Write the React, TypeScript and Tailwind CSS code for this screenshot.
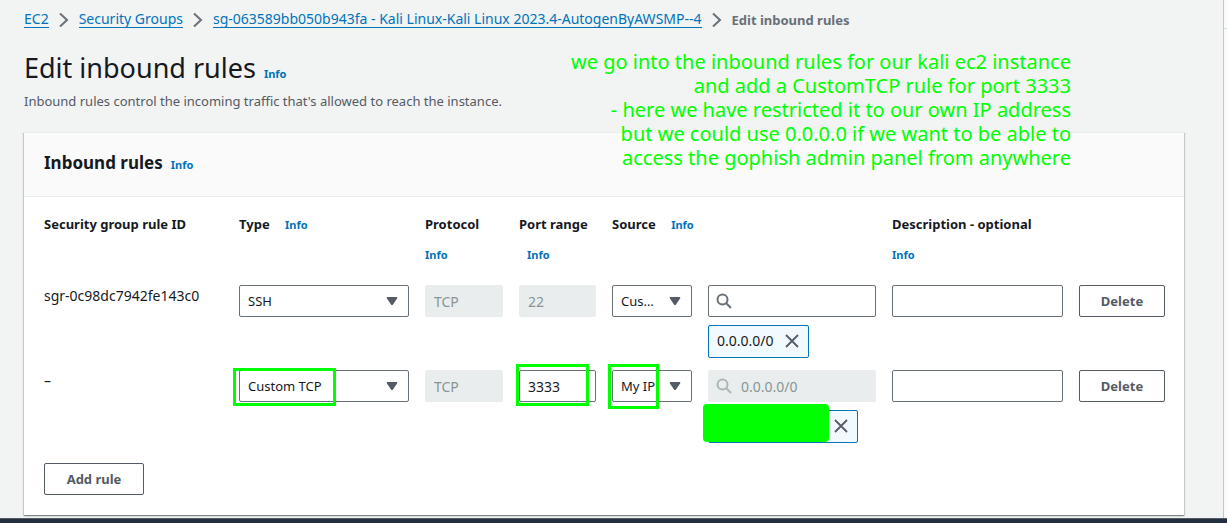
import React from "react";

const fieldBase =
  "block h-8 w-full rounded-xs border px-2 leading-5 outline-none";
const fieldEnabled = "border-[#687078] bg-white text-[#16191f]";
const fieldDisabled =
  "border-[#eaeded] bg-[#eaeded] text-[#879596] placeholder:text-[#879596]";

function Info({ className = "" }: { className?: string }) {
  return (
    <a href="#info" className={`text-[11px] leading-5 font-bold text-[#0073bb] ${className}`}>
      Info
    </a>
  );
}

function Chevron() {
  return (
    <svg viewBox="0 0 10 16" className="h-4 w-2.5 shrink-0" fill="none" stroke="#687078" strokeWidth="2">
      <path d="M1 1.5 8 8 1 14.5" />
    </svg>
  );
}

function SearchIcon({ dim }: { dim?: boolean }) {
  return (
    <svg
      viewBox="0 0 16 16"
      className="pointer-events-none absolute top-2 left-2 size-4"
      fill="none"
      stroke={dim ? "#aab7b8" : "#687078"}
      strokeWidth="2"
    >
      <circle cx="6.5" cy="6.5" r="5" />
      <path d="m10 10 5 5" />
    </svg>
  );
}

function Select({ label, options }: { label: string; options: string[] }) {
  return (
    <div className="relative">
      <select
        aria-label={label}
        className={`${fieldBase} ${fieldEnabled} appearance-none truncate pr-[34px] text-[13px]`}
      >
        {options.map((o) => (
          <option key={o}>{o}</option>
        ))}
      </select>
      <svg viewBox="0 0 12 8" className="pointer-events-none absolute top-3 right-[11px] h-2 w-3" fill="#545b64">
        <path d="M1.5 0h9a.8.8 0 0 1 .7 1.3L7 7.5a1.2 1.2 0 0 1-2 0L.8 1.3A.8.8 0 0 1 1.5 0Z" />
      </svg>
    </div>
  );
}

function Token({ text, wide }: { text: string; wide?: boolean }) {
  return (
    <div
      className={`mt-2 flex h-[33px] items-center justify-between rounded-xs border border-[#0073bb] bg-[#f1faff] px-2 pb-0.5 text-sm text-[#16191f] ${
        wide ? "w-[150px]" : "w-[101px]"
      }`}
    >
      <span>{text}</span>
      <button type="button" aria-label="Remove" className="flex size-4 items-center justify-center">
        <svg viewBox="0 0 16 16" className="size-4" fill="none" stroke="#545b64" strokeWidth="1.8">
          <path d="M2 2l12 12M14 2 2 14" />
        </svg>
      </button>
    </div>
  );
}

function Button({ children, className = "" }: { children: React.ReactNode; className?: string }) {
  return (
    <button
      type="button"
      className={`h-8 rounded-xs border border-[#545b64] bg-white text-[13px] leading-5 font-bold text-[#545b64] ${className}`}
    >
      {children}
    </button>
  );
}

function Mark({ className }: { className: string }) {
  return <div className={`pointer-events-none absolute border-3 border-[#00ff00] ${className}`} />;
}

const link = "border-b border-[#0073bb] text-sm leading-4 text-[#0073bb]";

const notes = [
  "we go into the inbound rules for our kali ec2 instance",
  "and add a CustomTCP rule for port 3333",
  "- here we have restricted it to our own IP address",
  "but we could use 0.0.0.0 if we want to be able to",
  "access the gophish admin panel from anywhere",
];

export default function App() {
  return (
    <div className="flex min-h-screen flex-col bg-[#f2f3f3] font-['Noto_Sans',sans-serif] text-[13px] leading-5 text-[#16191f]">
      <div className="flex flex-1">
        <main className="relative min-w-0 flex-1 pr-[39px] pb-[3px] pl-6">
          <nav aria-label="Breadcrumb" className="flex h-7 items-end gap-2.5 whitespace-nowrap">
            <a href="#ec2" className={link}>EC2</a>
            <Chevron />
            <a href="#groups" className={link}>Security Groups</a>
            <Chevron />
            <a href="#group" className={link}>
              sg-063589bb050b943fa - Kali Linux-Kali Linux 2023.4-AutogenByAWSMP--4
            </a>
            <Chevron />
            <span className="leading-4 font-bold text-[#687078]">Edit inbound rules</span>
          </nav>

          <h1 className="mt-[22px] flex items-baseline gap-2 text-[27px] leading-9">
            Edit inbound rules <Info />
          </h1>
          <p className="mt-[5px] text-[#545b64]">
            Inbound rules control the incoming traffic that's allowed to reach the instance.
          </p>

          <section className="mt-[21px] border-t border-[#eaeded] bg-white shadow-[0_1px_1px_0_rgba(0,28,36,0.3),1px_1px_1px_0_rgba(0,28,36,0.15),-1px_1px_1px_0_rgba(0,28,36,0.15)]">
            <h2 className="flex h-16 items-baseline gap-2 border-b border-[#eaeded] bg-[#fafafa] px-5 pt-[18px] text-[17px] leading-6 font-bold">
              Inbound rules <Info />
            </h2>
            <div className="pt-[17px] pr-[19px] pb-5 pl-5">
              <table className="w-full table-fixed text-left">
                <colgroup>
                  <col className="w-[195px]" />
                  <col className="w-[186px]" />
                  <col className="w-[94px]" />
                  <col className="w-[93px]" />
                  <col className="w-[96px]" />
                  <col className="w-[184px]" />
                  <col className="w-[187px]" />
                  <col className="w-[86px]" />
                </colgroup>
                <thead>
                  <tr className="h-[71px] align-top whitespace-nowrap">
                    <th>Security group rule ID</th>
                    <th>
                      Type <Info className="ml-3" />
                    </th>
                    <th>
                      Protocol
                      <Info className="mt-[11px] block" />
                    </th>
                    <th>
                      Port range
                      <Info className="mt-[11px] ml-2 block" />
                    </th>
                    <th colSpan={2}>
                      Source <Info className="ml-3" />
                    </th>
                    <th>
                      Description - optional
                      <Info className="mt-[11px] block" />
                    </th>
                    <td />
                  </tr>
                </thead>
                <tbody>
                  <tr className="h-[85px] align-top">
                    <td className="pt-px text-sm leading-5">sgr-0c98dc7942fe143c0</td>
                    <td className="pr-4"><Select label="Type" options={["SSH", "Custom TCP"]} /></td>
                    <td className="pr-4">
                      <input aria-label="Protocol" disabled defaultValue="TCP" className={`${fieldBase} ${fieldDisabled} text-sm`} />
                    </td>
                    <td className="pr-4">
                      <input aria-label="Port range" disabled defaultValue="22" className={`${fieldBase} ${fieldDisabled} text-sm`} />
                    </td>
                    <td className="pr-4"><Select label="Source" options={["Custom", "My IP"]} /></td>
                    <td className="pr-4">
                      <div className="relative">
                        <input aria-label="Source address" className={`${fieldBase} ${fieldEnabled} pl-8 text-sm`} />
                        <SearchIcon />
                      </div>
                      <Token text="0.0.0.0/0" />
                    </td>
                    <td className="pr-4">
                      <input aria-label="Description" className={`${fieldBase} ${fieldEnabled} text-sm`} />
                    </td>
                    <td><Button className="w-full">Delete</Button></td>
                  </tr>
                  <tr className="align-top">
                    <td className="pt-px text-sm leading-5">–</td>
                    <td className="relative pr-4">
                      <Select label="Type" options={["Custom TCP", "SSH"]} />
                      <Mark className="-top-0.5 -left-1.5 h-[38px] w-[103px]" />
                    </td>
                    <td className="pr-4">
                      <input aria-label="Protocol" disabled defaultValue="TCP" className={`${fieldBase} ${fieldDisabled} text-sm`} />
                    </td>
                    <td className="relative pr-4">
                      <input aria-label="Port range" defaultValue="3333" className={`${fieldBase} ${fieldEnabled} text-sm`} />
                      <Mark className="-top-1.5 -left-[3px] h-[42px] w-[73px]" />
                    </td>
                    <td className="relative pr-4">
                      <Select label="Source" options={["My IP", "Custom"]} />
                      <Mark className="-top-1.5 -left-1 h-[45px] w-[51px]" />
                    </td>
                    <td className="relative pr-4">
                      <div className="relative">
                        <input aria-label="Source address" disabled placeholder="0.0.0.0/0" className={`${fieldBase} ${fieldDisabled} pl-8 text-sm`} />
                        <SearchIcon dim />
                      </div>
                      <Token text="" wide />
                      <div className="absolute top-[34px] -left-[5px] h-[38px] w-[126px] rounded-sm bg-[#00ff00]" />
                    </td>
                    <td className="pr-4">
                      <input aria-label="Description" className={`${fieldBase} ${fieldEnabled} text-sm`} />
                    </td>
                    <td><Button className="w-full">Delete</Button></td>
                  </tr>
                </tbody>
              </table>
              <Button className="mt-5 w-25">Add rule</Button>
            </div>
          </section>

          <div className="pointer-events-none absolute top-[50px] right-[152px] text-right text-[20px] leading-6 whitespace-nowrap text-[#00ff00]">
            {notes.map((line) => (
              <p key={line}>{line}</p>
            ))}
          </div>
        </main>
        <aside className="w-1 border-l border-[#c4c8c8] bg-[#fafafa]">
          <div className="h-[29px] border-b border-[#d5dbdb]" />
        </aside>
      </div>
      <footer className="h-[5px] border-t border-[#545b64] bg-[#232f3e]" />
    </div>
  );
}
